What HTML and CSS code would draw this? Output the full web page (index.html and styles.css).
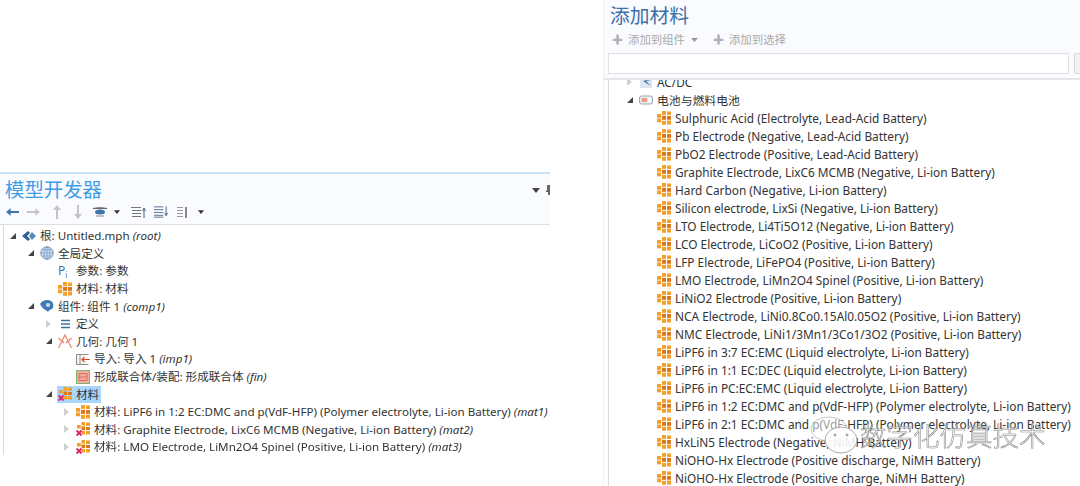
FILE: index.html
```html
<!DOCTYPE html>
<html lang="zh">
<head>
<meta charset="utf-8">
<title>模型开发器 / 添加材料</title>
<link rel="stylesheet" href="styles.css">
</head>
<body>
<svg class="defs" width="0" height="0" aria-hidden="true">
  <defs>
    <symbol id="mat" viewBox="0 0 14 14">
      <g fill="#f2a02a">
        <rect x="5" y="0" width="4" height="3.800"/><rect x="10" y="0.500" width="4" height="3.500"/>
        <rect x="0" y="3" width="4.200" height="3.800"/><rect x="0" y="7.500" width="4.200" height="3.800"/>
        <rect x="5" y="9.800" width="4" height="4"/><rect x="10" y="9.500" width="4" height="4"/>
      </g>
      <g fill="#d9791c">
        <rect x="5" y="4.800" width="4" height="4"/><rect x="10" y="5" width="4" height="3.800"/>
      </g>
    </symbol>
    <symbol id="matx" viewBox="0 0 14 14">
      <g fill="#f2a02a">
        <rect x="5.500" y="0" width="3.500" height="3.500"/><rect x="10" y="0.500" width="4" height="3.500"/>
        <rect x="1" y="3" width="3.800" height="3.500"/><rect x="5.500" y="9" width="3.500" height="3.500"/>
        <rect x="10" y="9" width="4" height="3.500"/>
      </g>
      <g fill="#d9791c">
        <rect x="5.500" y="4.500" width="3.500" height="3.600"/><rect x="10" y="5" width="4" height="3"/>
      </g>
      <path d="M0.500 8.500l5 5M5.500 8.500l-5 5" stroke="#e0206c" stroke-width="1.900" fill="none"/>
    </symbol>
  </defs>
</svg>

<main class="canvas">
  <section class="panel dev">
    <header class="head dev-head">
      <div class="title-row">
        <h1 class="title dev-title">模型开发器</h1>
        <div class="corner">
          <svg width="8" height="5" viewBox="0 0 8 5"><path d="M0 0h8L4 5z" fill="#444"/></svg>
          <svg width="4" height="10" viewBox="0 0 4 10"><path d="M1 0h3v10H2V7H0V6l1-1z" fill="#666"/></svg>
        </div>
      </div>
      <div class="tools">
        <svg width="13" height="10" viewBox="0 0 14 10"><path d="M0 5l5-4v3h9v2H5v3z" fill="#3f74a8"/></svg>
        <svg class="t1" width="13" height="10" viewBox="0 0 14 10"><path d="M14 5L9 1v3H0v2h9v3z" fill="#c4c4c4"/></svg>
        <svg class="t2" width="10" height="14" viewBox="0 0 10 14"><path d="M5 0l4 5H6v9H4V5H1z" fill="#c4c4c4"/></svg>
        <svg class="t3" width="10" height="14" viewBox="0 0 10 14"><path d="M5 14l4-5H6V0H4v9H1z" fill="#c4c4c4"/></svg>
        <svg class="t4" width="14" height="10" viewBox="0 0 14 10"><path d="M0 1c4-1 10-1 14 0v1H0z" fill="#666"/><ellipse cx="7" cy="5" rx="5" ry="2.500" fill="#3f74a8"/><path d="M3 9h8" stroke="#888"/></svg>
        <svg class="t5" width="6" height="4" viewBox="0 0 8 5"><path d="M0 0h8L4 5z" fill="#333"/></svg>
        <svg class="t6" width="15" height="11" viewBox="0 0 15 11"><path d="M0 .5h10M1 3.500h9M1 6.500h9M1 9.500h9" stroke="#777"/><path d="M13 11V3M11.500 4l1.500-3 1.500 3" stroke="#3f5f80" fill="none"/></svg>
        <svg class="t7" width="14" height="12" viewBox="0 0 15 12"><path d="M0 .5h10M0 3.500h10M0 6.500h10M0 9.500h10M0 11.500h10" stroke="#4d6d8d"/><path d="M13 0v8M11.500 7l1.500 3 1.500-3" stroke="#3f5f80" fill="none"/></svg>
        <svg class="t8" width="10" height="11" viewBox="0 0 10 11"><path d="M0 .5h6M0 3.500h6M0 6.500h6M0 9.500h6" stroke="#999"/><path d="M8 0h2v11H8z" fill="#888"/></svg>
        <svg class="t9" width="6" height="4" viewBox="0 0 8 5"><path d="M0 0h8L4 5z" fill="#333"/></svg>
      </div>
    </header>
    <ul class="tree dev-tree">
      <li class="row l0"><i class="tw open"></i>
        <svg class="ico" viewBox="0 0 14 14"><path d="M0 7l6-5 2 2-3 3 3 3-2 2z" fill="#2f5f92"/><path d="M7 7l3-4 4 4-4 4z" fill="#5c8abb"/></svg>
        <span>根: Untitled.mph <em>(root)</em></span></li>
      <li class="row l1"><i class="tw open"></i>
        <svg class="ico" viewBox="0 0 14 14"><circle cx="7" cy="7" r="6.200" fill="#d6e4f2" stroke="#6e94bc"/><path d="M1 7h12M7 1v12M2.200 4h9.600M2.200 10h9.600" stroke="#6e94bc" stroke-width=".7"/><ellipse cx="7" cy="7" rx="3" ry="6" fill="none" stroke="#6e94bc" stroke-width=".7"/></svg>
        <span>全局定义</span></li>
      <li class="row l2"><i class="tw"></i><span class="ico pi">P<sub>i</sub></span><span>参数: 参数</span></li>
      <li class="row l2"><i class="tw"></i><svg class="ico"><use href="#mat"/></svg><span>材料: 材料</span></li>
      <li class="row l1"><i class="tw open"></i>
        <svg class="ico" viewBox="0 0 14 14"><path d="M0 5c2-4 8-5 11-3 3 2 3 6 1 8-2 1-3 1-4 3-1-2-5-2-8-8z" fill="#3f7ab4"/><circle cx="8" cy="6" r="2" fill="#cfe0f0"/></svg>
        <span>组件: 组件 1 <em>(comp1)</em></span></li>
      <li class="row l2"><i class="tw shut"></i>
        <svg class="ico" viewBox="0 0 14 14"><path d="M3 3.500h9M3 7h9M3 10.500h9" stroke="#3f6f9f" stroke-width="1.500"/></svg>
        <span>定义</span></li>
      <li class="row l2"><i class="tw open"></i>
        <svg class="ico" viewBox="0 0 14 14"><path d="M0.500 14L7 1l6.500 13M0.500 4l5.500 5M13.500 4L8 9" fill="none" stroke="#e8846c" stroke-width="1.200"/></svg>
        <span>几何: 几何 1</span></li>
      <li class="row l3"><i class="tw"></i>
        <svg class="ico" viewBox="0 0 14 14"><path d="M.5 2.500h12M.5 2.500v10h12M4 2.500v10" fill="#f4f4f4" stroke="#8a8a8a"/><path d="M14 7.500H6M8.500 5L6 7.500 8.500 10" fill="none" stroke="#e0421e" stroke-width="1.200"/></svg>
        <span>导入: 导入 1 <em>(imp1)</em></span></li>
      <li class="row l3"><i class="tw"></i>
        <svg class="ico" viewBox="0 0 14 14"><rect x=".5" y=".5" width="13" height="13" fill="#f2ada0" stroke="#7cb86c"/><path d="M3 7h8M3 3.500h8v7H3z" fill="none" stroke="#d9705e"/></svg>
        <span>形成联合体/装配: 形成联合体 <em>(fin)</em></span></li>
      <li class="row l2"><i class="tw open"></i><span class="sel"><svg class="ico"><use href="#matx"/></svg><span>材料</span></span></li>
      <li class="row l3"><i class="tw shut"></i><svg class="ico"><use href="#mat"/></svg><span>材料: LiPF6 in 1:2 EC:DMC and p(VdF-HFP) (Polymer electrolyte, Li-ion Battery) <em>(mat1)</em></span></li>
      <li class="row l3"><i class="tw shut"></i><svg class="ico"><use href="#matx"/></svg><span>材料: Graphite Electrode, LixC6 MCMB (Negative, Li-ion Battery) <em>(mat2)</em></span></li>
      <li class="row l3"><i class="tw shut"></i><svg class="ico"><use href="#matx"/></svg><span>材料: LMO Electrode, LiMn2O4 Spinel (Positive, Li-ion Battery) <em>(mat3)</em></span></li>
    </ul>
  </section>

  <section class="panel add">
    <header class="head add-head">
      <h1 class="title add-title">添加材料</h1>
      <div class="add-tools">
        <span class="plus">✚</span><span>添加到组件</span>
        <svg class="caret" width="7" height="4" viewBox="0 0 7 4"><path d="M0 0h7L3.500 4z" fill="#999"/></svg>
        <span class="plus p2">✚</span><span>添加到选择</span>
      </div>
      <div class="search"><div class="input"></div><div class="btn"></div></div>
    </header>
    <ul class="tree add-tree">
      <li class="row clip l0"><i class="tw shut"></i>
        <svg class="ico" viewBox="0 0 14 14"><rect x="1" y="1" width="12" height="12" fill="#dbe6f0"/><path d="M2 2l10 3-5 1 5 5-8-5 4-1z" fill="#3f6f9f"/></svg>
        <span>AC/DC</span></li>
      <li class="row l0"><i class="tw open"></i>
        <svg class="ico" viewBox="0 0 14 14"><rect x=".5" y="3" width="13" height="8" rx="2" fill="#eee" stroke="#98a8b8"/><rect x="2.500" y="5" width="6" height="4" fill="#f29a90"/><rect x="8.500" y="5" width="3" height="4" fill="#fff"/></svg>
        <span>电池与燃料电池</span></li>
      <li class="row l1"><i class="tw"></i><svg class="ico"><use href="#mat"/></svg><span>Sulphuric Acid (Electrolyte, Lead-Acid Battery)</span></li>
      <li class="row l1"><i class="tw"></i><svg class="ico"><use href="#mat"/></svg><span>Pb Electrode (Negative, Lead-Acid Battery)</span></li>
      <li class="row l1"><i class="tw"></i><svg class="ico"><use href="#mat"/></svg><span>PbO2 Electrode (Positive, Lead-Acid Battery)</span></li>
      <li class="row l1"><i class="tw"></i><svg class="ico"><use href="#mat"/></svg><span>Graphite Electrode, LixC6 MCMB (Negative, Li-ion Battery)</span></li>
      <li class="row l1"><i class="tw"></i><svg class="ico"><use href="#mat"/></svg><span>Hard Carbon (Negative, Li-ion Battery)</span></li>
      <li class="row l1"><i class="tw"></i><svg class="ico"><use href="#mat"/></svg><span>Silicon electrode, LixSi (Negative, Li-ion Battery)</span></li>
      <li class="row l1"><i class="tw"></i><svg class="ico"><use href="#mat"/></svg><span>LTO Electrode, Li4Ti5O12 (Negative, Li-ion Battery)</span></li>
      <li class="row l1"><i class="tw"></i><svg class="ico"><use href="#mat"/></svg><span>LCO Electrode, LiCoO2 (Positive, Li-ion Battery)</span></li>
      <li class="row l1"><i class="tw"></i><svg class="ico"><use href="#mat"/></svg><span>LFP Electrode, LiFePO4 (Positive, Li-ion Battery)</span></li>
      <li class="row l1"><i class="tw"></i><svg class="ico"><use href="#mat"/></svg><span>LMO Electrode, LiMn2O4 Spinel (Positive, Li-ion Battery)</span></li>
      <li class="row l1"><i class="tw"></i><svg class="ico"><use href="#mat"/></svg><span>LiNiO2 Electrode (Positive, Li-ion Battery)</span></li>
      <li class="row l1"><i class="tw"></i><svg class="ico"><use href="#mat"/></svg><span>NCA Electrode, LiNi0.8Co0.15Al0.05O2 (Positive, Li-ion Battery)</span></li>
      <li class="row l1"><i class="tw"></i><svg class="ico"><use href="#mat"/></svg><span>NMC Electrode, LiNi1/3Mn1/3Co1/3O2 (Positive, Li-ion Battery)</span></li>
      <li class="row l1"><i class="tw"></i><svg class="ico"><use href="#mat"/></svg><span>LiPF6 in 3:7 EC:EMC (Liquid electrolyte, Li-ion Battery)</span></li>
      <li class="row l1"><i class="tw"></i><svg class="ico"><use href="#mat"/></svg><span>LiPF6 in 1:1 EC:DEC (Liquid electrolyte, Li-ion Battery)</span></li>
      <li class="row l1"><i class="tw"></i><svg class="ico"><use href="#mat"/></svg><span>LiPF6 in PC:EC:EMC (Liquid electrolyte, Li-ion Battery)</span></li>
      <li class="row l1"><i class="tw"></i><svg class="ico"><use href="#mat"/></svg><span>LiPF6 in 1:2 EC:DMC and p(VdF-HFP) (Polymer electrolyte, Li-ion Battery)</span></li>
      <li class="row l1"><i class="tw"></i><svg class="ico"><use href="#mat"/></svg><span>LiPF6 in 2:1 EC:DMC and p(VdF-HFP) (Polymer electrolyte, Li-ion Battery)</span></li>
      <li class="row l1"><i class="tw"></i><svg class="ico"><use href="#mat"/></svg><span>HxLiN5 Electrode (Negative, NiMH Battery)</span></li>
      <li class="row l1"><i class="tw"></i><svg class="ico"><use href="#mat"/></svg><span>NiOHO-Hx Electrode (Positive discharge, NiMH Battery)</span></li>
      <li class="row l1"><i class="tw"></i><svg class="ico"><use href="#mat"/></svg><span>NiOHO-Hx Electrode (Positive charge, NiMH Battery)</span></li>
    </ul>
  </section>
</main>

<div class="mark">
  <svg class="bubbles" width="50" height="38" viewBox="0 0 50 38"><ellipse cx="19" cy="13" rx="18" ry="12" fill="#fff" fill-opacity=".5" stroke="#c4c4c4"/><ellipse cx="31" cy="24" rx="16" ry="13" fill="#fff" fill-opacity=".88" stroke="#aaa"/><circle cx="25" cy="19" r="1.500" fill="#aaa"/><circle cx="37" cy="19" r="1.500" fill="#aaa"/></svg>
  <span class="mark-text">数字化仿真技术</span>
</div>
</body>
</html>
```
FILE: styles.css
```css
* { box-sizing: border-box; }
html, body { margin: 0; padding: 0; background: #fff; }
body {
  width: 1080px; height: 486px; overflow: hidden; position: relative;
  font-family: "Noto Sans", "Noto Sans CJK SC", sans-serif;
  font-size: 11.850px; color: #333;
}
.defs { position: absolute; }
.canvas { display: flex; align-items: flex-start; height: 486px; filter: blur(.4px); }
.panel { display: flex; flex-direction: column; }
.dev { width: 550px; margin-top: 172px; }
.add { width: 477px; margin-left: 53px; height: 486px; overflow: hidden; border-left: 1px solid #eef0f4; }
.head { background: #fafbff; }
.dev-head { height: 53px; border-top: 2px solid #c6e2f7; border-bottom: 1px solid #dedede; padding: 3px 0 0 5px; }
.title-row { display: flex; justify-content: space-between; align-items: center; }
.title { margin: 0; font-weight: 400; line-height: 26px; }
.dev-title { color: #3f9be4; font-size: 19.400px; }
.corner { display: flex; align-items: center; gap: 6px; }
.tools { display: flex; align-items: center; height: 14px; margin-top: 2px; padding-left: 1px; }
.t1 { margin-left: 8px; }
.t2 { margin-left: 12px; }
.t3 { margin-left: 11px; }
.t4 { margin-left: 10px; }
.t5 { margin-left: 7px; }
.t6 { margin-left: 11px; }
.t7 { margin-left: 8px; }
.t8 { margin-left: 9px; }
.t9 { margin-left: 11px; }
.tree { list-style: none; margin: 0; padding: 0; background: #fff; }
.dev-tree { border-left: 1px solid #dcdcdc; margin-left: 3px; padding-top: 2px; height: 230px; font-size: 11.600px; }
.row { display: flex; align-items: center; height: 17.600px; white-space: nowrap; line-height: 17px; }
.dev-tree .l0 { padding-left: 6px; }
.dev-tree .l1 { padding-left: 24px; }
.dev-tree .l2 { padding-left: 42px; }
.dev-tree .l3 { padding-left: 60px; }
.tw { flex: none; width: 12px; height: 8px; display: block; position: relative; }
.tw.open::before { content: ""; position: absolute; left: 0; top: 1px; border-style: solid; border-width: 0 0 6px 6px; border-color: transparent transparent #444 transparent; }
.tw.shut::before { content: ""; position: absolute; left: 0; top: 0; border-style: solid; border-width: 4px 0 4px 5px; border-color: transparent transparent transparent #d0d0d0; }
.ico { flex: none; width: 14px; height: 14px; margin-right: 4px; display: block; }
.pi { color: #3f74a8; font-size: 12px; line-height: 14px; }
.pi sub { font-size: 8px; line-height: 0; }
em { font-style: italic; }
.sel { display: flex; align-items: center; background: #a9d6fb; margin-left: -1px; padding: 0 2px 0 1px; height: 17px; }
.add-head { height: 80px; flex: none; padding: 3px 0 0 3px; border-bottom: 2px solid #e6e6e6; }
.add-title { color: #3d6fa8; font-size: 19.800px; margin-left: 3px; }
.add-tools { display: flex; align-items: center; height: 16px; margin-top: 3px; color: #a8a8a8; line-height: 16px; padding-left: 5px; font-size: 11.400px; }
.plus { font-size: 11px; margin-right: 5px; color: #b0b0b0; }
.caret { margin-left: 6px; }
.p2 { margin-left: 15px; }
.search { display: flex; gap: 5px; margin-top: 5px; margin-left: 1px; }
.input { flex: none; width: 461px; height: 21px; background: #fff; border: 1px solid #e0e0e0; }
.btn { flex: none; width: 20px; height: 21px; background: #f2f2f2; border: 1px solid #d8d8d8; border-radius: 2px; }
.add-tree { margin-left: 4px; border-left: 1px solid #dcdcdc; height: 406px; overflow: hidden; }
.add-tree .row { height: 18px; }
.add-tree .l0 { padding-left: 18px; }
.add-tree .l1 { padding-left: 36px; }
.clip { margin-top: -7px; }
.mark { position: absolute; left: 810px; top: 415px; display: flex; align-items: center; }
.mark-text {
  font-family: "Noto Sans CJK SC", sans-serif; font-weight: 300; font-size: 26.500px; line-height: 40px;
  color: rgba(255,255,255,.6); -webkit-text-stroke: .6px #8c8c8c; margin-left: 0; white-space: nowrap;
}
```
